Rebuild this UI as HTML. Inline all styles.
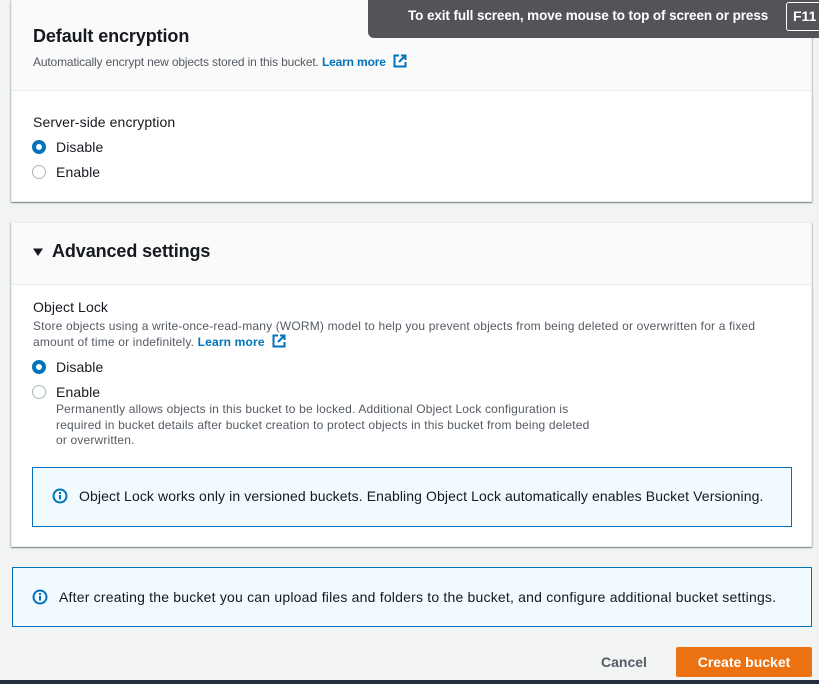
<!DOCTYPE html>
<html><head><meta charset="utf-8"><style>
*{margin:0;padding:0;box-sizing:border-box}
body{width:819px;height:684px;overflow:hidden;background:#f2f3f3;font-family:"Liberation Sans",Arial,sans-serif;color:#16191f;position:relative}
.a{position:absolute;white-space:nowrap}
.card{position:absolute;left:11px;width:801px;background:#fff;border:1px solid #eaeded;box-shadow:0 1px 1px rgba(0,28,36,.3),1px 1px 1px rgba(0,28,36,.15),-1px 1px 1px rgba(0,28,36,.15)}
.hdr{position:absolute;left:0;right:0;top:0;background:#fafafa;border-bottom:1px solid #eaeded}
.sm{font-size:12px;color:#545b64;letter-spacing:0.17px}
.lk{color:#0073bb;font-weight:bold}
.rad{position:absolute;width:14px;height:14px;border-radius:50%}
.on{border:4px solid #0073bb;background:#fff}
.off{border:1px solid #aab7b8;background:#fff}
.lbl{font-size:14px;letter-spacing:0.1px}
.info{position:absolute;border:1px solid #0073bb;background:#f1faff;border-radius:0}
</style></head><body>

<div class="card" style="top:0;height:202px;border-top:none">
  <div class="hdr" style="height:91px"></div>
</div>
<div class="a" style="left:33px;top:26px;font-size:18px;font-weight:bold;letter-spacing:-0.1px">Default encryption</div>
<div class="a sm" style="left:33px;top:54px;letter-spacing:-0.15px">Automatically encrypt new objects stored in this bucket. <span class="lk">Learn more</span>
<svg width="14" height="14" viewBox="0 0 14 14" style="vertical-align:-2px;margin-left:4px"><path d="M6 1.5H1.5v11h11V8" fill="none" stroke="#0073bb" stroke-width="2"/><path d="M8 1.5h4.5V6M12.5 1.5L6 8" fill="none" stroke="#0073bb" stroke-width="2"/></svg></div>
<div class="a lbl" style="left:33px;top:114px">Server-side encryption</div>
<div class="rad on" style="left:32px;top:140px"></div>
<div class="a lbl" style="left:56px;top:139px">Disable</div>
<div class="rad off" style="left:32px;top:165px"></div>
<div class="a lbl" style="left:56px;top:164px">Enable</div>

<div class="card" style="top:222px;height:325px">
  <div class="hdr" style="height:62px"></div>
</div>
<svg class="a" style="left:33px;top:247px" width="10" height="10" viewBox="0 0 10 10"><path d="M0 1.5h10L5 9z" fill="#16191f"/></svg>
<div class="a" style="left:52px;top:241px;font-size:18px;font-weight:bold;letter-spacing:-0.1px">Advanced settings</div>
<div class="a lbl" style="left:33px;top:299px">Object Lock</div>
<div class="a sm" style="left:33px;top:318px;line-height:16px">Store objects using a write-once-read-many (WORM) model to help you prevent objects from being deleted or overwritten for a fixed<br>amount of time or indefinitely. <span class="lk">Learn more</span>
<svg width="14" height="14" viewBox="0 0 14 14" style="vertical-align:-2px;margin-left:4px"><path d="M6 1.5H1.5v11h11V8" fill="none" stroke="#0073bb" stroke-width="2"/><path d="M8 1.5h4.5V6M12.5 1.5L6 8" fill="none" stroke="#0073bb" stroke-width="2"/></svg></div>
<div class="rad on" style="left:32px;top:360px"></div>
<div class="a lbl" style="left:56px;top:359px">Disable</div>
<div class="rad off" style="left:32px;top:385px"></div>
<div class="a lbl" style="left:56px;top:384px">Enable</div>
<div class="a sm" style="left:56px;top:402px;line-height:15.5px;letter-spacing:0.17px">Permanently allows objects in this bucket to be locked. Additional Object Lock configuration is<br>required in bucket details after bucket creation to protect objects in this bucket from being deleted<br>or overwritten.</div>

<div class="info" style="left:32px;top:467px;width:760px;height:60px"></div>
<svg class="a" style="left:52px;top:488px" width="16" height="16" viewBox="0 0 16 16"><circle cx="8" cy="8" r="6.5" fill="none" stroke="#0073bb" stroke-width="2"/><rect x="7" y="7" width="2" height="4.5" fill="#0073bb"/><rect x="7" y="4" width="2" height="2" fill="#0073bb"/></svg>
<div class="a lbl" style="left:79px;top:488px;letter-spacing:0.1px">Object Lock works only in versioned buckets. Enabling Object Lock automatically enables Bucket Versioning.</div>

<div class="info" style="left:12px;top:567px;width:800px;height:60px"></div>
<svg class="a" style="left:32px;top:589px" width="16" height="16" viewBox="0 0 16 16"><circle cx="8" cy="8" r="6.5" fill="none" stroke="#0073bb" stroke-width="2"/><rect x="7" y="7" width="2" height="4.5" fill="#0073bb"/><rect x="7" y="4" width="2" height="2" fill="#0073bb"/></svg>
<div class="a lbl" style="left:59px;top:589px;letter-spacing:0.2px">After creating the bucket you can upload files and folders to the bucket, and configure additional bucket settings.</div>

<div class="a" style="left:601px;top:654px;font-size:14px;font-weight:bold;color:#545b64">Cancel</div>
<div class="a" style="left:676px;top:647px;width:136px;height:30px;background:#ec7211;border-radius:2px;color:#fff;font-size:14px;font-weight:bold;text-align:center;line-height:30px">Create bucket</div>
<div class="a" style="left:0;top:680px;width:819px;height:4px;background:#232f3e"></div>

<div class="a" style="left:368px;top:0;width:451px;height:38px;background:#525458;border-radius:0 0 0 6px"></div>
<div class="a" style="left:408px;top:8px;font-size:13.5px;font-weight:bold;color:#fff;letter-spacing:-0.1px">To exit full screen, move mouse to top of screen or press</div>
<div class="a" style="left:786px;top:2px;width:40px;height:29px;border:1px solid #fff;border-radius:3px;color:#fff;font-size:14px;font-weight:bold;padding:5px 0 0 6px">F11</div>
</body></html>
